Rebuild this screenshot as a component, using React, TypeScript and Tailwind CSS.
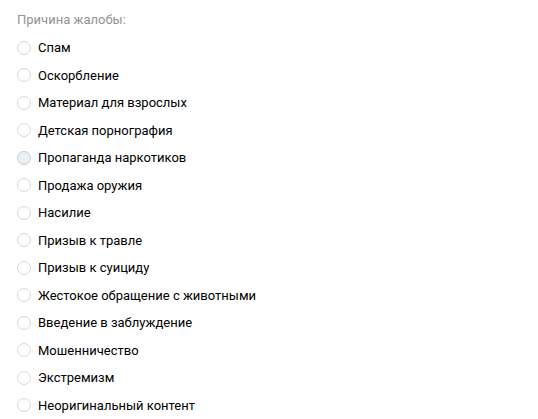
const reasons = [
  'Спам',
  'Оскорбление',
  'Материал для взрослых',
  'Детская порнография',
  'Пропаганда наркотиков',
  'Продажа оружия',
  'Насилие',
  'Призыв к травле',
  'Призыв к суициду',
  'Жестокое обращение с животными',
  'Введение в заблуждение',
  'Мошенничество',
  'Экстремизм',
  'Неоригинальный контент',
]

export default function App() {
  return (
    <div className="h-[419px] w-[538px] overflow-hidden bg-white pl-[17px] pt-[10px] font-['Roboto',sans-serif] text-[13px]">
      <div className="h-[19px] leading-[19px] text-[#939393]">Причина жалобы:</div>
      <div className="mt-[5px] flex flex-col">
        {reasons.map((r, i) => (
          <label key={r} className="flex h-[27.5px] items-center">
            <span
              className={
                i === 4
                  ? 'h-[14px] w-[14px] shrink-0 rounded-full border border-[#c5ccd3] bg-[#eceff2]'
                  : 'h-[14px] w-[14px] shrink-0 rounded-full border border-[#d3d9de] bg-white'
              }
            />
            <span className="ml-[7px] text-[#000]">{r}</span>
          </label>
        ))}
      </div>
    </div>
  )
}
